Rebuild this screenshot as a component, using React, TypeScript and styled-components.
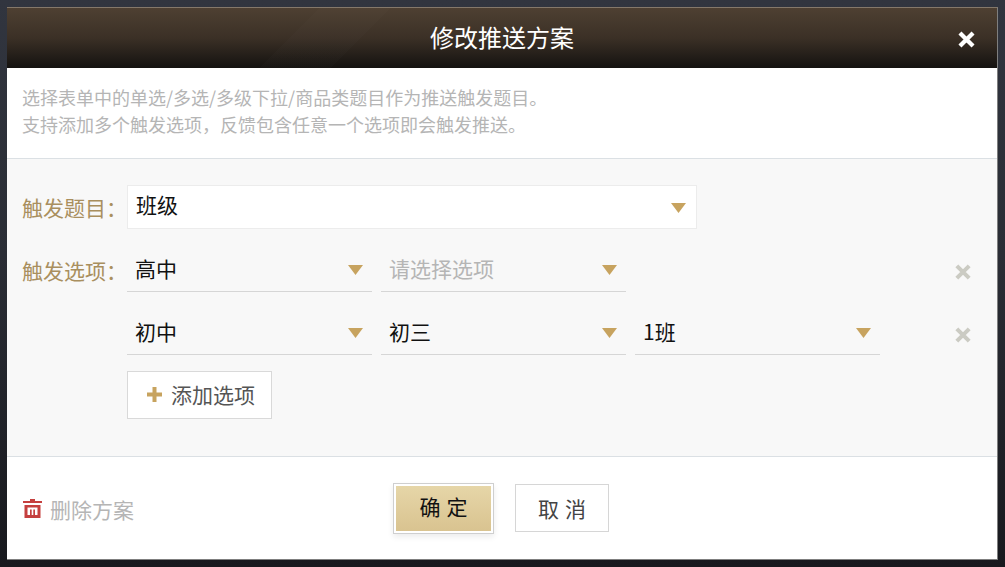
import React from 'react'
import styled, { createGlobalStyle } from 'styled-components'

const GlobalStyle = createGlobalStyle`
  html, body {
    margin: 0;
    padding: 0;
    height: 100%;
  }
  body {
    background: linear-gradient(180deg, #31353f 0%, #2a2d35 45%, #18191e 100%);
    font-family: "Noto Sans CJK SC", "Liberation Sans", sans-serif;
    overflow: hidden;
  }
  * {
    box-sizing: border-box;
  }
`

const Page = styled.div`
  width: 1005px;
  height: 567px;
  padding: 7px;
`

const Dialog = styled.div`
  width: 991px;
  height: 553px;
  display: flex;
  flex-direction: column;
  background: #fff;
  border: 1px solid #7f7f7f;
  border-top-color: #84786a;
  border-left-width: 0;
`

const Header = styled.div`
  height: 60px;
  flex: none;
  display: flex;
  align-items: center;
  justify-content: center;
  padding-bottom: 2px;
  background:
    linear-gradient(135deg, transparent 221px, rgba(255, 255, 255, 0.013) 221px, rgba(255, 255, 255, 0.013) 271px, transparent 271px),
    linear-gradient(180deg, #4e4032 0%, #3b3026 50%, #141210 100%);
  position: relative;
`

const Title = styled.div`
  color: #fff;
  font-size: 24px;
  line-height: 32px;
`

const CloseButton = styled.div`
  position: absolute;
  right: 21px;
  top: 22px;
  width: 19px;
  height: 19px;
  color: #fff;
  display: flex;
`

const Intro = styled.div`
  height: 91px;
  flex: none;
  padding: 16px 15px 0;
  font-size: 18px;
  line-height: 27px;
  color: #b5b5b5;
  border-bottom: 1px solid #dbe0e4;
`

const Body = styled.div`
  height: 298px;
  flex: none;
  background: #f8f8f8;
  border-bottom: 1px solid #dbe0e4;
  padding: 26px 25px 0 15px;
  display: flex;
  flex-direction: column;
  gap: 19px;
`

const Row = styled.div`
  display: flex;
  align-items: flex-start;
`

const Label = styled.div`
  width: 105px;
  flex: none;
  font-size: 21px;
  line-height: 44px;
  color: #a98f5e;
  white-space: nowrap;
`

const Field = styled.div`
  width: 570px;
  height: 44px;
  background: #fff;
  border: 1px solid #ececec;
  display: flex;
  align-items: center;
  justify-content: space-between;
  padding: 0 10px 6px 8px;
  font-size: 21px;
  color: #111;
`

const Selects = styled.div`
  display: flex;
  gap: 9px;
  flex: 1;
`

const Select = styled.div<{ $empty?: boolean }>`
  width: 245px;
  height: 44px;
  border-bottom: 1px solid #d6d6d6;
  display: flex;
  align-items: center;
  justify-content: space-between;
  padding: 0 9px 3px 8px;
  font-size: 21px;
  color: ${(p) => (p.$empty ? '#b5b5b5' : '#111')};
`

const Arrow = styled.span`
  width: 15px;
  height: 10px;
  flex: none;
  margin-top: 4px;
  background: #c7a35f;
  clip-path: polygon(0 0, 100% 0, 50% 100%);
`

const FieldArrow = styled(Arrow)`
  margin-top: 8px;
`

const RemoveIcon = styled.div`
  width: 18px;
  height: 18px;
  flex: none;
  margin-top: 15px;
  color: #cbcbc3;
  display: flex;
`

const AddRow = styled.div`
  padding-left: 105px;
  margin-top: -3px;
`

const AddButton = styled.div`
  width: 145px;
  height: 48px;
  background: #fff;
  border: 1px solid #d9d9d9;
  display: flex;
  align-items: center;
  padding: 0 0 2px 19px;
  gap: 9px;
  font-size: 21px;
  color: #555;
`

const Footer = styled.div`
  flex: 1;
  display: grid;
  grid-template-columns: 370px auto 1fr;
  align-items: center;
  padding-left: 16px;
`

const DeleteLink = styled.div`
  display: flex;
  align-items: center;
  gap: 8px;
  padding-top: 1px;
  font-size: 21px;
  color: #b5b5b5;
`

const Buttons = styled.div`
  display: flex;
  align-items: center;
  gap: 21px;
`

const ConfirmButton = styled.div`
  width: 101px;
  height: 51px;
  border: 1px solid #cfcfcf;
  padding: 2px;
  background: #fff;
  box-shadow: 0 3px 6px rgba(0, 0, 0, 0.08);
  font-size: 21px;
  letter-spacing: 6px;
  color: #111;
`

const ConfirmInner = styled.div`
  height: 100%;
  display: flex;
  align-items: center;
  justify-content: center;
  padding: 0 0 4px 6px;
  background: linear-gradient(180deg, #e6d6a8 0%, #d9c390 100%);
`

const CancelButton = styled.div`
  width: 94px;
  height: 48px;
  border: 1px solid #d6d6d6;
  display: flex;
  align-items: center;
  justify-content: center;
  padding: 0 0 0 6px;
  font-size: 21px;
  letter-spacing: 6px;
  color: #444;
`

const Cross = () => (
  <svg viewBox="0 0 16 16" width="100%" height="100%">
    <path d="M2.5 2.5 L13.5 13.5 M13.5 2.5 L2.5 13.5" stroke="currentColor" strokeWidth="3.6" fill="none" />
  </svg>
)

const Plus = () => (
  <svg viewBox="0 0 15 15" width="15" height="15">
    <path d="M7.500 0 V15 M0 7.500 H15" stroke="#c7a35f" strokeWidth="4" fill="none" />
  </svg>
)

const Trash = () => (
  <svg viewBox="0 0 19 19" width="19" height="19">
    <path d="M7 0 H12 V2 H19 V4 H0 V2 H7 Z" fill="#c5403f" />
    <path fillRule="evenodd" d="M1.500 6 H17.500 V19 H1.500 Z M4.500 8.500 V16 H14.500 V8.500 Z" fill="#c5403f" />
    <path d="M7 10.500 H8.700 V16 H7 Z M10.300 10.500 H12 V16 H10.300 Z" fill="#c5403f" />
  </svg>
)

const optionRows = [
  ['高中', '', ''],
  ['初中', '初三', '1班'],
]

export default function App() {
  return (
    <Page>
      <GlobalStyle />
      <Dialog>
        <Header>
          <Title>修改推送方案</Title>
          <CloseButton>
            <Cross />
          </CloseButton>
        </Header>
        <Intro>
          选择表单中的单选/多选/多级下拉/商品类题目作为推送触发题目。
          <br />
          支持添加多个触发选项，反馈包含任意一个选项即会触发推送。
        </Intro>
        <Body>
          <Row>
            <Label>触发题目：</Label>
            <Field>
              班级
              <FieldArrow />
            </Field>
          </Row>
          {optionRows.map((row, i) => (
            <Row key={i}>
              <Label>{i === 0 ? '触发选项：' : ''}</Label>
              <Selects>
                <Select>
                  {row[0]}
                  <Arrow />
                </Select>
                <Select $empty={!row[1]}>
                  {row[1] || '请选择选项'}
                  <Arrow />
                </Select>
                {row[2] && (
                  <Select>
                    {row[2]}
                    <Arrow />
                  </Select>
                )}
              </Selects>
              <RemoveIcon>
                <Cross />
              </RemoveIcon>
            </Row>
          ))}
          <AddRow>
            <AddButton>
              <Plus />
              添加选项
            </AddButton>
          </AddRow>
        </Body>
        <Footer>
          <DeleteLink>
            <Trash />
            删除方案
          </DeleteLink>
          <Buttons>
            <ConfirmButton>
              <ConfirmInner>确定</ConfirmInner>
            </ConfirmButton>
            <CancelButton>取消</CancelButton>
          </Buttons>
        </Footer>
      </Dialog>
    </Page>
  )
}
